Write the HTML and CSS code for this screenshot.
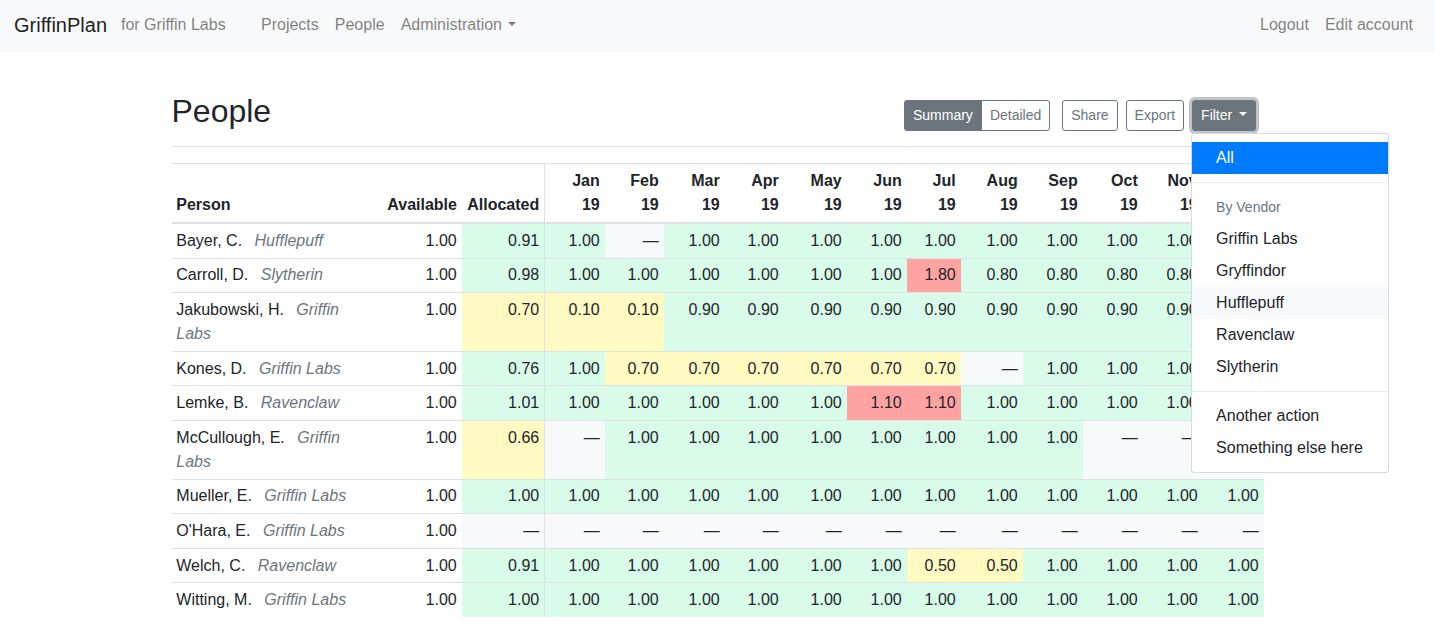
FILE: index.html
```html
<!DOCTYPE html>
<html lang="en">
<head>
<meta charset="utf-8">
<title>People - GriffinPlan</title>
<link rel="stylesheet" href="styles.css">
</head>
<body>
<nav class="navbar">
  <a class="brand" href="#">GriffinPlan</a>
  <span class="navbar-text">for Griffin Labs</span>
  <ul class="nav">
    <li><a class="nav-link" href="#">Projects</a></li>
    <li><a class="nav-link" href="#">People</a></li>
    <li><a class="nav-link caret" href="#">Administration</a></li>
  </ul>
  <ul class="nav nav-right">
    <li><a class="nav-link" href="#">Logout</a></li>
    <li><a class="nav-link" href="#">Edit account</a></li>
  </ul>
</nav>

<main class="container">
  <div class="page-header">
    <h2>People</h2>
    <div class="toolbar">
      <div class="btn-group">
        <button class="btn btn-active btn-first">Summary</button>
        <button class="btn btn-outline btn-last">Detailed</button>
      </div>
      <button class="btn btn-outline">Share</button>
      <button class="btn btn-outline">Export</button>
      <div class="dropdown">
        <button class="btn btn-active btn-focus caret">Filter</button>
        <div class="dropdown-menu">
          <a class="dropdown-item active" href="#">All</a>
          <div class="dropdown-divider"></div>
          <h6 class="dropdown-header">By Vendor</h6>
          <a class="dropdown-item" href="#">Griffin Labs</a>
          <a class="dropdown-item" href="#">Gryffindor</a>
          <a class="dropdown-item hover" href="#">Hufflepuff</a>
          <a class="dropdown-item" href="#">Ravenclaw</a>
          <a class="dropdown-item" href="#">Slytherin</a>
          <div class="dropdown-divider"></div>
          <a class="dropdown-item" href="#">Another action</a>
          <a class="dropdown-item" href="#">Something else here</a>
        </div>
      </div>
    </div>
  </div>

  <table class="people">
    <colgroup>
      <col class="c-person"><col class="c-avail"><col class="c-alloc">
      <col class="c60"><col class="c59"><col class="c61"><col class="c59"><col class="c63"><col class="c60">
      <col class="c54"><col class="c62"><col class="c60"><col class="c60"><col class="c60"><col class="c61">
    </colgroup>
    <thead>
      <tr>
        <th class="left">Person</th>
        <th>Available</th>
        <th class="split">Allocated</th>
        <th>Jan<br>19</th><th>Feb<br>19</th><th>Mar<br>19</th><th>Apr<br>19</th>
        <th>May<br>19</th><th>Jun<br>19</th><th>Jul<br>19</th><th>Aug<br>19</th>
        <th>Sep<br>19</th><th>Oct<br>19</th><th>Nov<br>19</th><th>Dec<br>19</th>
      </tr>
    </thead>
    <tbody>
      <tr>
        <td class="left">Bayer, C. <em class="vendor">Hufflepuff</em></td>
        <td>1.00</td><td class="split g">0.91</td>
        <td class="g">1.00</td><td class="e">—</td><td class="g">1.00</td><td class="g">1.00</td><td class="g">1.00</td><td class="g">1.00</td>
        <td class="g">1.00</td><td class="g">1.00</td><td class="g">1.00</td><td class="g">1.00</td><td class="g">1.00</td><td class="g">1.00</td>
      </tr>
      <tr>
        <td class="left">Carroll, D. <em class="vendor">Slytherin</em></td>
        <td>1.00</td><td class="split g">0.98</td>
        <td class="g">1.00</td><td class="g">1.00</td><td class="g">1.00</td><td class="g">1.00</td><td class="g">1.00</td><td class="g">1.00</td>
        <td class="r">1.80</td><td class="g">0.80</td><td class="g">0.80</td><td class="g">0.80</td><td class="g">0.80</td><td class="g">0.80</td>
      </tr>
      <tr>
        <td class="left">Jakubowski, H. <em class="vendor">Griffin Labs</em></td>
        <td>1.00</td><td class="split y">0.70</td>
        <td class="y">0.10</td><td class="y">0.10</td><td class="g">0.90</td><td class="g">0.90</td><td class="g">0.90</td><td class="g">0.90</td>
        <td class="g">0.90</td><td class="g">0.90</td><td class="g">0.90</td><td class="g">0.90</td><td class="g">0.90</td><td class="g">0.90</td>
      </tr>
      <tr>
        <td class="left">Kones, D. <em class="vendor">Griffin Labs</em></td>
        <td>1.00</td><td class="split g">0.76</td>
        <td class="g">1.00</td><td class="y">0.70</td><td class="y">0.70</td><td class="y">0.70</td><td class="y">0.70</td><td class="y">0.70</td>
        <td class="y">0.70</td><td class="e">—</td><td class="g">1.00</td><td class="g">1.00</td><td class="g">1.00</td><td class="g">1.00</td>
      </tr>
      <tr>
        <td class="left">Lemke, B. <em class="vendor">Ravenclaw</em></td>
        <td>1.00</td><td class="split g">1.01</td>
        <td class="g">1.00</td><td class="g">1.00</td><td class="g">1.00</td><td class="g">1.00</td><td class="g">1.00</td><td class="r">1.10</td>
        <td class="r">1.10</td><td class="g">1.00</td><td class="g">1.00</td><td class="g">1.00</td><td class="g">1.00</td><td class="g">1.00</td>
      </tr>
      <tr>
        <td class="left">McCullough, E. <em class="vendor">Griffin Labs</em></td>
        <td>1.00</td><td class="split y">0.66</td>
        <td class="e">—</td><td class="g">1.00</td><td class="g">1.00</td><td class="g">1.00</td><td class="g">1.00</td><td class="g">1.00</td>
        <td class="g">1.00</td><td class="g">1.00</td><td class="g">1.00</td><td class="e">—</td><td class="e">—</td><td class="e">—</td>
      </tr>
      <tr>
        <td class="left">Mueller, E. <em class="vendor">Griffin Labs</em></td>
        <td>1.00</td><td class="split g">1.00</td>
        <td class="g">1.00</td><td class="g">1.00</td><td class="g">1.00</td><td class="g">1.00</td><td class="g">1.00</td><td class="g">1.00</td>
        <td class="g">1.00</td><td class="g">1.00</td><td class="g">1.00</td><td class="g">1.00</td><td class="g">1.00</td><td class="g">1.00</td>
      </tr>
      <tr>
        <td class="left">O'Hara, E. <em class="vendor">Griffin Labs</em></td>
        <td>1.00</td><td class="split e">—</td>
        <td class="e">—</td><td class="e">—</td><td class="e">—</td><td class="e">—</td><td class="e">—</td><td class="e">—</td>
        <td class="e">—</td><td class="e">—</td><td class="e">—</td><td class="e">—</td><td class="e">—</td><td class="e">—</td>
      </tr>
      <tr>
        <td class="left">Welch, C. <em class="vendor">Ravenclaw</em></td>
        <td>1.00</td><td class="split g">0.91</td>
        <td class="g">1.00</td><td class="g">1.00</td><td class="g">1.00</td><td class="g">1.00</td><td class="g">1.00</td><td class="g">1.00</td>
        <td class="y">0.50</td><td class="y">0.50</td><td class="g">1.00</td><td class="g">1.00</td><td class="g">1.00</td><td class="g">1.00</td>
      </tr>
      <tr>
        <td class="left">Witting, M. <em class="vendor">Griffin Labs</em></td>
        <td>1.00</td><td class="split g">1.00</td>
        <td class="g">1.00</td><td class="g">1.00</td><td class="g">1.00</td><td class="g">1.00</td><td class="g">1.00</td><td class="g">1.00</td>
        <td class="g">1.00</td><td class="g">1.00</td><td class="g">1.00</td><td class="g">1.00</td><td class="g">1.00</td><td class="g">1.00</td>
      </tr>
    </tbody>
  </table>
</main>
</body>
</html>
```

FILE: styles.css
```css
* { box-sizing: border-box; }

body {
  margin: 0;
  font-family: "Liberation Sans", Arial, sans-serif;
  font-size: 16px;
  line-height: 1.5;
  color: #212529;
  background: #fff;
}

a { text-decoration: none; }

/* Navbar */
.navbar {
  display: flex;
  align-items: center;
  height: 52px;
  padding: 0 14px 2px;
  background: #f8f9fa;
}
.brand {
  width: 107px;
  font-size: 20px;
  line-height: 30px;
  color: rgba(0, 0, 0, 0.9);
}
.navbar-text {
  width: 132px;
  color: rgba(0, 0, 0, 0.5);
}
.nav {
  display: flex;
  list-style: none;
  margin: 0;
  padding: 0;
}
.nav-right { margin-left: auto; }
.nav-link {
  display: block;
  padding: 0 8px;
  color: rgba(0, 0, 0, 0.5);
}
.caret::after {
  content: "";
  display: inline-block;
  margin-left: 0.4em;
  vertical-align: 0.255em;
  border-top: 0.3em solid;
  border-right: 0.3em solid transparent;
  border-left: 0.3em solid transparent;
}

/* Main */
.container {
  width: 1092px;
  margin: 0 auto;
}
.page-header {
  display: flex;
  justify-content: space-between;
  align-items: center;
  margin-top: 40px;
  padding-bottom: 8px;
  margin-bottom: 16px;
  border-bottom: 1px solid #dee2e6;
}
.page-header h2 {
  margin: 0 0 8px;
  font-size: 32px;
  font-weight: 500;
  line-height: 1.2;
}
.toolbar {
  display: flex;
  align-items: center;
  margin-right: 8px;
}
.btn-group {
  display: flex;
  margin-right: 12px;
}
.btn {
  font-family: inherit;
  font-size: 14px;
  line-height: 21px;
  padding: 4px 8px;
  border: 1px solid #6c757d;
  border-radius: 3px;
  background: #fff;
  color: #6c757d;
  cursor: pointer;
}
.toolbar > .btn { margin-right: 8px; }
.btn-active {
  background: #6c757d;
  color: #fff;
}
.btn-first { border-top-right-radius: 0; border-bottom-right-radius: 0; }
.btn-last { border-top-left-radius: 0; border-bottom-left-radius: 0; margin-left: -1px; }
.btn-focus { box-shadow: 0 0 0 3px rgba(130, 138, 145, 0.5); }
.btn.caret::after { margin-left: 0.45em; }

.dropdown { position: relative; }
.dropdown-menu {
  position: absolute;
  top: calc(100% + 2px);
  left: -1px;
  z-index: 10;
  width: 198px;
  padding: 8px 0;
  background: #fff;
  border: 1px solid rgba(0, 0, 0, 0.15);
  border-radius: 4px;
}
.dropdown-item {
  display: block;
  padding: 4px 24px;
  line-height: 24px;
  color: #212529;
  white-space: nowrap;
}
.dropdown-item.active { background: #007bff; color: #fff; }
.dropdown-item.hover { background: #f8f9fa; }
.dropdown-divider {
  height: 0;
  margin: 8px 0;
  border-top: 1px solid #e9ecef;
}
.dropdown-header {
  margin: 0;
  padding: 8px 24px;
  font-size: 14px;
  font-weight: 500;
  line-height: 1.2;
  color: #6c757d;
}

/* Table */
.people {
  width: 1092px;
  table-layout: fixed;
  border-collapse: collapse;
}
.c-person { width: 211px; }
.c-avail { width: 79px; }
.c-alloc { width: 83px; }
.c54 { width: 54px; }
.c59 { width: 59px; }
.c60 { width: 60px; }
.c61 { width: 61px; }
.c62 { width: 62px; }
.c63 { width: 63px; }

.people th,
.people td {
  padding: 4.8px;
  border-top: 1px solid #dee2e6;
  text-align: right;
  vertical-align: top;
}
.people thead th {
  vertical-align: bottom;
  border-bottom: 2px solid #dee2e6;
  font-weight: 700;
}
.people .left { text-align: left; }
.people .split { border-right: 1px solid #dee2e6; }
.vendor {
  margin-left: 8px;
  color: #6c757d;
}
.g { background: #d8fce9; }
.y { background: #fffac2; }
.r { background: #ffa2a2; }
.e { background: #f8f9fa; }
```
